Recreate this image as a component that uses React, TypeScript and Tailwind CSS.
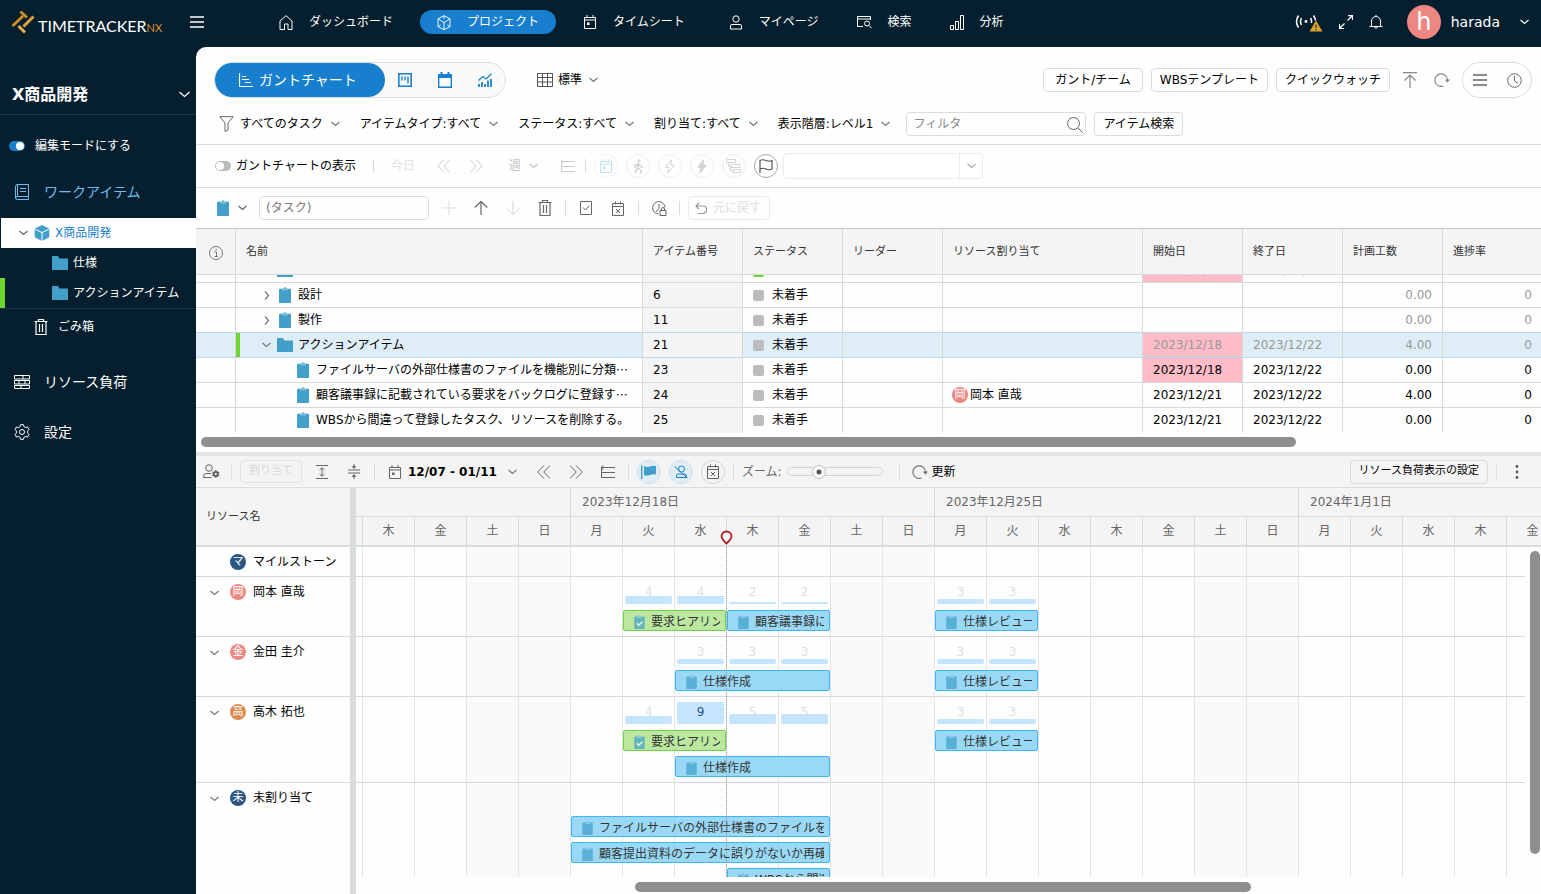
import type { ReactNode } from "react";

/* ---------- icons ---------- */

type IconProps = { className?: string; w?: number; h?: number; box?: string; children?: ReactNode; sw?: number };

function Svg({ className = "", w = 16, h = 16, box, children, sw = 1 }: IconProps) {
  return (
    <svg
      aria-hidden="true"
      width={w}
      height={h}
      viewBox={box ?? `0 0 ${w} ${h}`}
      fill="none"
      stroke="currentColor"
      strokeWidth={sw}
      className={`shrink-0 ${className}`}
    >
      {children}
    </svg>
  );
}

const Chevron = ({ className = "" }: { className?: string }) => (
  <Svg w={9} h={6} sw={1.2} className={className}>
    <path d="M0.5 1l4 3.5 4-3.5" />
  </Svg>
);
const ChevronRight = () => (
  <Svg w={6} h={9} sw={1.2} className="text-[#777]">
    <path d="M1 0.5l3.5 4-3.5 4" />
  </Svg>
);
const Clipboard = ({ small = false, check = false }: { small?: boolean; check?: boolean }) => (
  <Svg w={small ? 11 : 12} h={small ? 14 : 16} box="0 0 12 16">
    <rect x="0" y="1.800" width="12" height="14.200" rx="1" fill="#429fca" stroke="none" />
    <path d="M3 3.500V1.500h1.500a1.500 1.500 0 0 1 3 0H9v2z" fill="#7cc0de" stroke="none" />
    {check && <path d="M3 9.500l2.300 2.300L9.500 7.500" stroke="#e6fbd8" strokeWidth="1.800" />}
  </Svg>
);
const Folder = () => (
  <Svg w={16} h={14}>
    <path d="M0 0h6l1.500 2.500H16V14H0z" fill="#429fca" stroke="none" />
  </Svg>
);
const CubeSolid = () => (
  <Svg w={16} h={16}>
    <path d="M8 0l7.300 3.500v8.700L8 16 .7 12.200V3.500z" fill="#429fca" stroke="none" />
    <path d="M.7 4L8 7.600 15.300 4M8 7.600V16" stroke="#fff" strokeWidth="1" />
  </Svg>
);
const Trash = ({ className = "" }: { className?: string }) => (
  <Svg w={14} h={16} className={className}>
    <path d="M0.500 2.500h13M4.500 2V.5h5V2M2 3v12.500h10V3M5.500 5v8M8.500 5v8" strokeWidth="1.200" />
  </Svg>
);
const CalendarDot = ({ className = "" }: { className?: string }) => (
  <Svg w={14} h={14} className={className}>
    <path d="M1.500 2.500h11v11h-11zM1.500 5h11M4 0v3M10 0v3" />
    <path d="M4 7.500h2.500v2.500H4z" fill="currentColor" stroke="none" />
  </Svg>
);
const CalendarX = () => (
  <Svg w={14} h={15}>
    <path d="M1.500 2.500h11v12h-11zM1.500 5.500h11M4.500 .5v3M9.500 .5v3M5 8l4 4M9 8l-4 4" />
  </Svg>
);
const DoubleLeft = () => (
  <Svg w={14} h={14}>
    <path d="M7 .5L.700 7 7 13.500M13 .5L6.700 7l6.300 6.500" />
  </Svg>
);
const DoubleRight = () => (
  <Svg w={14} h={14}>
    <path d="M1 .5L7.300 7 1 13.500M7 .5L13.300 7 7 13.500" />
  </Svg>
);
const Outdent = () => (
  <Svg w={16} h={14}>
    <path d="M1 2.500h14M3.500 .5l-2.500 2 2.500 2M1.500 2.500v10M1.500 7.500H15M1.500 12.500H15" />
  </Svg>
);
const Refresh = ({ className = "" }: { className?: string }) => (
  <Svg w={16} h={14} className={className}>
    <path d="M9.500 13A6.300 6.300 0 1 1 13.500 7.500" strokeWidth="1.200" />
    <path d="M10.800 6.500h5.200L13.400 9.800z" fill="currentColor" stroke="none" />
  </Svg>
);
const Lines = ({ className = "" }: { className?: string }) => (
  <Svg w={14} h={12} className={className}>
    <path d="M0 1h14M0 6h14M0 11h14" strokeWidth="1.300" />
  </Svg>
);
const ArrowUp = () => (
  <Svg w={14} h={16}>
    <path d="M7 1.500V15M.700 7.500L7 1.500l6.300 6" strokeWidth="1.200" />
  </Svg>
);
const ArrowDown = () => (
  <Svg w={14} h={16}>
    <path d="M7 1v13.500M.700 8.500l6.300 6 6.300-6" />
  </Svg>
);
const Logo = () => (
  <Svg w={24} h={26}>
    <g strokeWidth="3">
      <path d="M9.500 2.500l6.500 6" stroke="#cf8a26" />
      <path d="M1.500 17L12 7" stroke="#d48d24" />
      <path d="M12.500 17.500l10-10" stroke="#e2a040" />
      <path d="M7.500 17l6.500 6.500" stroke="#edae50" />
    </g>
  </Svg>
);

/* ---------- small parts ---------- */

const Sep = () => <span className="h-3.5 w-px shrink-0 bg-[#d8dadb]" />;

function IconBtn({ label, className = "text-[#666]", disabled, children }: { label: string; className?: string; disabled?: boolean; children: ReactNode }) {
  return (
    <button type="button" aria-label={label} disabled={disabled} className={`flex size-6 shrink-0 items-center justify-center rounded-full ${className}`}>
      {children}
    </button>
  );
}

function TextBtn({ children, className = "px-2" }: { children: ReactNode; className?: string }) {
  return (
    <button type="button" className={`flex h-6 shrink-0 items-center justify-center rounded border border-[#dcdcdc] whitespace-nowrap ${className}`}>
      {children}
    </button>
  );
}

function Dropdown({ children }: { children: ReactNode }) {
  return (
    <button type="button" aria-haspopup="menu" className="flex shrink-0 items-center gap-2 whitespace-nowrap">
      {children}
      <Chevron className="text-[#777]" />
    </button>
  );
}

function Toggle({ label, on, className }: { label: string; on?: boolean; className: string }) {
  return (
    <label className={`flex shrink-0 items-center whitespace-nowrap ${className}`}>
      <input
        type="checkbox"
        defaultChecked={on}
        className="flex h-2.5 w-4 shrink-0 appearance-none items-center rounded-full bg-[#bcbcbc] p-px before:size-2 before:rounded-full before:bg-white checked:justify-end checked:bg-[#177fce]"
      />
      {label}
    </label>
  );
}

function Avatar({ children, color }: { children: ReactNode; color: string }) {
  return <span className={`flex size-4 shrink-0 items-center justify-center rounded-full text-[11px] leading-4 text-white ${color}`}>{children}</span>;
}

/* ---------- header and sidebar ---------- */

function NavItem({ icon, children, active }: { icon: ReactNode; children: ReactNode; active?: boolean }) {
  return (
    <a href="#" className={`flex h-6 items-center gap-4 rounded-full px-[17px] whitespace-nowrap ${active ? "bg-[#177fce]" : ""}`}>
      {icon}
      {children}
    </a>
  );
}

function Header() {
  return (
    <header className="flex h-[47px] shrink-0 items-center pb-[3px] text-white">
      <a href="#" className="flex w-[190px] shrink-0 items-center gap-[3px] pl-[11px]">
        <Logo />
        <span className="pt-2.5 font-['Lato',sans-serif] text-base leading-5 whitespace-nowrap">
          TIMETRACKER<span className="text-[11px] text-[#d9922b]">NX</span>
        </span>
      </a>
      <button type="button" aria-label="メニュー">
        <Lines />
      </button>
      <nav className="ml-[58px] flex items-center gap-1">
        <div className="flex items-center gap-2.5">
          <NavItem icon={<Svg w={14} h={15}><path d="M1 14.500V6L7 .700 13 6v8.500H9V9H5.500v5.500z" /></Svg>}>ダッシュボード</NavItem>
          <NavItem active icon={<Svg w={14} h={15}><path d="M7 .700l6 3v8l-6 3-6-3v-8zM1 3.700l6 4 6-4M7 7.700v7M1 11.500l2.500-1.500M13 11.500l-2.500-1.500M7 .700V4" strokeWidth=".9" /></Svg>}>プロジェクト</NavItem>
          <NavItem icon={<CalendarDot />}>タイムシート</NavItem>
          <NavItem icon={<Svg w={14} h={15}><circle cx="7" cy="4" r="3.200" /><path d="M1.500 14v-3q0-1.500 1.500-1.500h8q1.500 0 1.500 1.500v3z" /></Svg>}>マイページ</NavItem>
        </div>
        <NavItem icon={<Svg w={15} h={14}><path d="M13.500 5V1.500H.5v10H6M.5 4h13" /><circle cx="10" cy="8.500" r="2.500" /><path d="M12 10.500l2.500 2.500" /></Svg>}>検索</NavItem>
        <NavItem icon={<Svg w={14} h={15}><path d="M.5 10.500h3v4h-3zM5.500 6.500h3v8h-3zM10.500 .5h3v14h-3z" /></Svg>}>分析</NavItem>
      </nav>
      <div className="ml-auto flex items-center gap-4 pr-3">
        <button type="button" aria-label="接続状態">
          <Svg w={28} h={20}>
            <path d="M3.500 3.500q-4 6.500 0 12M6.500 6q-2 3.500 0 7M18.500 3.500q2 3 2 5M15.500 6q1.500 2 .8 5" strokeWidth="1.500" />
            <circle cx="11" cy="9.500" r="1.400" fill="currentColor" stroke="none" />
            <path d="M21 8.500l6.500 11h-13z" fill="#dfa02d" stroke="none" />
            <path d="M21 12.500v3.500M21 17v1.500" stroke="#5c4a1c" strokeWidth="1.600" />
          </Svg>
        </button>
        <button type="button" aria-label="全画面">
          <Svg w={14} h={14}><path d="M8.500 5.500l4.500-4.500M9 .600h4.500V5M5.500 8.500L1 13M.600 9v4.500H5" strokeWidth="1.200" /></Svg>
        </button>
        <button type="button" aria-label="通知">
          <Svg w={14} h={14}><path d="M.5 11.500h13M2.500 11V6a4.500 4.500 0 0 1 9 0v5M7 0v1.500M5.500 12.500q1.500 1.500 3 0" /></Svg>
        </button>
        <button type="button" className="ml-2 flex items-center text-sm">
          <span className="flex size-[34px] items-center justify-center rounded-full bg-[#ec8782] text-2xl leading-8">h</span>
          <span className="ml-2.5">harada</span>
          <Chevron className="ml-5" />
        </button>
      </div>
    </header>
  );
}

function Sidebar() {
  return (
    <aside className="flex w-[196px] shrink-0 flex-col text-white">
      <button type="button" className="flex h-[68px] items-center justify-between border-b border-[#1d3545] pt-7 pr-1.5 pl-3 text-base font-bold">
        X商品開発
        <Svg w={11} h={7} sw={1.2}><path d="M.5 1l5 4.500 5-4.500" /></Svg>
      </button>
      <Toggle label="編集モードにする" on className="h-[62px] gap-2.5 pl-[9px]" />
      <a href="#" className="flex h-[41px] items-center gap-3.5 pb-3 pl-3.5 text-sm text-[#6fbcf0]">
        <Svg w={16} h={16}><path d="M3.500 .5h11v12h-11M3.500 .5Q1.500 .5 1.500 2.500v11.500q0-1.500 2-1.500V.5M1.500 14q0 1.500 2 1.500h11v-3M6 4.500h6M6 7.500h6" /></Svg>
        ワークアイテム
      </a>
      <nav className="border-b border-[#1d3545]">
        <a href="#" className="ml-px flex h-[30px] items-center bg-white pl-[18px] text-[#177fce]">
          <Chevron className="text-[#666]" />
          <span className="mr-[5px] ml-1.5"><CubeSolid /></span>
          X商品開発
        </a>
        <a href="#" className="flex h-[30px] items-center gap-[5px] pl-[52px]"><Folder />仕様</a>
        <a href="#" className="flex h-[30px] items-center gap-[5px] border-l-[5px] border-[#6fd62f] pl-[47px] whitespace-nowrap"><Folder />アクションアイテム</a>
      </nav>
      <a href="#" className="flex h-9 items-center gap-2.5 pl-[34px]"><Trash />ごみ箱</a>
      <a href="#" className="mt-3 flex h-[50px] items-center gap-3.5 pl-3.5 text-sm">
        <Svg w={16} h={14}><path d="M.5 .5h15v3.500H.5zM.5 5.500h15v3.500H.5zM.5 10.500h15V13.500H.5zM9 .5V4M5 5.500V9M11 5.500V9M7 10.500V13.500" /></Svg>
        リソース負荷
      </a>
      <a href="#" className="flex h-[50px] items-center gap-3.5 pl-3.5 text-sm">
        <Svg w={16} h={16}>
          <path d="M6.500 .700h3l.6 2.100 1.300.7 2.100-.5 1.500 2.600-1.500 1.600v1.600l1.500 1.600-1.500 2.600-2.100-.5-1.300.7-.6 2.100h-3l-.6-2.100-1.300-.7-2.100.5L1 10.400l1.500-1.600V7.200L1 5.600 2.500 3l2.100.5 1.300-.7z" />
          <circle cx="8" cy="8" r="2.500" />
        </Svg>
        設定
      </a>
    </aside>
  );
}

/* ---------- upper toolbars ---------- */

function ViewBar() {
  return (
    <div className="flex items-center pr-[9px] pl-[18px]">
      <div className="flex h-9 shrink-0 items-center rounded-full border border-[#dcdcdc] bg-[#fafafa] text-[#177fce]">
        <button type="button" className="flex h-[34px] w-[170px] items-center gap-1.5 rounded-full bg-[#177fce] pl-6 text-sm text-white">
          <Svg w={14} h={14}><path d="M.5 0v13.500H14M3 3.500h4M3 6.500h7M6 9.500h6" strokeWidth="1.200" /></Svg>
          ガントチャート
        </button>
        <button type="button" aria-label="ボード" className="flex w-10 justify-center">
          <Svg w={14} h={14}><path d="M.8 .8h12.400v12.400H.8z" strokeWidth="1.600" /><path d="M4 3.500v4M7 3.500v4M10 3.500v7" strokeWidth="1.400" /></Svg>
        </button>
        <button type="button" aria-label="カレンダー" className="flex w-10 justify-center">
          <Svg w={14} h={16}><path d="M.7 3h12.600v12.300H.7z" strokeWidth="1.400" /><path d="M0 2h14v4H0zM2.500 0h2v3h-2zM9.500 0h2v3h-2z" fill="currentColor" stroke="none" /></Svg>
        </button>
        <button type="button" aria-label="グラフ" className="flex w-10 justify-center">
          <Svg w={14} h={14}><path d="M1 14v-3M4 14v-5M7 14v-3M10 14V7.500M13 14V6" strokeWidth="1.800" /><path d="M.5 7.500L5 3.500l3 2.500L13.500 .7" strokeWidth="1.300" /></Svg>
        </button>
      </div>
      <button type="button" aria-haspopup="menu" className="ml-[31px] flex items-center gap-[5px] whitespace-nowrap">
        <Svg w={16} h={14} className="text-[#555]"><path d="M.5 .5h15v13H.5zM.5 4.500h15M.5 9h15M5.500 .5v13M10.500 .5v13" /></Svg>
        標準
        <Chevron className="ml-0.5 text-[#777]" />
      </button>
      <div className="ml-auto flex items-center gap-2">
        <TextBtn className="px-[11px]">ガント/チーム</TextBtn>
        <TextBtn>WBSテンプレート</TextBtn>
        <TextBtn>クイックウォッチ</TextBtn>
        <IconBtn label="先頭へ" className="text-[#888]"><Svg w={14} h={16}><path d="M0 .7h14M7 3v13M1.500 8.500L7 3l5.500 5.500" strokeWidth="1.200" /></Svg></IconBtn>
        <IconBtn label="再読み込み" className="text-[#888]"><Refresh /></IconBtn>
        <div className="flex h-9 w-[70px] items-center justify-between rounded-full border border-[#dcdcdc] px-[5px]">
          <IconBtn label="一覧"><Lines /></IconBtn>
          <IconBtn label="履歴"><Svg w={15} h={15}><circle cx="7.500" cy="7.500" r="6.800" /><path d="M7.500 3v5l3.500 2.500" /></Svg></IconBtn>
        </div>
      </div>
    </div>
  );
}

function FilterBar() {
  return (
    <div className="flex h-6 items-center gap-5 pl-[23px]">
      <div className="flex items-center gap-1.5">
        <Svg w={15} h={16} className="text-[#666]"><path d="M.8 .7h13.400L9 7v7l-3 1.500V7z" /></Svg>
        <Dropdown>すべてのタスク</Dropdown>
      </div>
      <Dropdown>アイテムタイプ:すべて</Dropdown>
      <Dropdown>ステータス:すべて</Dropdown>
      <Dropdown>割り当て:すべて</Dropdown>
      <Dropdown>表示階層:レベル1</Dropdown>
      <div className="-ml-1 flex gap-2">
        <label className="flex h-6 w-[180px] items-center rounded-sm border border-[#dcdcdc] pr-0.5 pl-1.5">
          <input aria-label="フィルタ" placeholder="フィルタ" className="w-full min-w-0 outline-none placeholder:text-[#888]" />
          <Svg w={17} h={17} className="text-[#666]"><circle cx="7.500" cy="7.500" r="6" /><path d="M12 12l4.500 4.500" /></Svg>
        </label>
        <TextBtn>アイテム検索</TextBtn>
      </div>
    </div>
  );
}

function GanttBar() {
  const ring = "border border-[#f0f0f0] text-[#d4d4d4]";
  return (
    <div className="flex h-[43px] items-center gap-2 border-b border-[#dcdcdc] pl-[19px] text-[#ccc]">
      <Toggle label="ガントチャートの表示" className="mr-[9px] gap-[5px] text-black" />
      <Sep />
      <button type="button" disabled className="mx-[9px] text-[#e2e2e2]">今日</button>
      <IconBtn label="前へ" disabled className="text-[#ccc]"><DoubleLeft /></IconBtn>
      <IconBtn label="次へ" disabled className="text-[#ccc]"><DoubleRight /></IconBtn>
      <button type="button" disabled className="mr-2.5 ml-[13px] flex items-center gap-2 text-[#c4c4c4]">週<Chevron /></button>
      <IconBtn label="アウトデント" disabled className="text-[#ccc]"><Outdent /></IconBtn>
      <span className="-ml-[3px] h-3.5 w-px bg-[#d8dadb]" />
      <IconBtn label="予定" disabled className="border border-[#eef4f7] text-[#bfe3f0]"><CalendarDot /></IconBtn>
      <IconBtn label="進捗" disabled className={ring}>
        <Svg w={12} h={15}><circle cx="7" cy="1.700" r="1.500" fill="currentColor" stroke="none" /><path d="M6.500 4L5.500 9l3 2 .7 3.500M5.500 9L2.500 14M6.500 4.500L3 6.500v2.500M7 5l1.500 2.500 2.500.7" strokeWidth="1.500" /></Svg>
      </IconBtn>
      <IconBtn label="イナズマ線" disabled className={ring}><Svg w={12} h={15}><path d="M7.500 .8L1.500 8.500h3.500L4 14l6.500-8H7z" /></Svg></IconBtn>
      <IconBtn label="イナズマ" disabled className={ring}><Svg w={12} h={15}><path d="M7.500 .8L1.500 8.500h3.500L4 14l6.500-8H7z" fill="currentColor" /></Svg></IconBtn>
      <IconBtn label="依存関係" disabled className={ring}><Svg w={15} h={14}><path d="M.5 .5h9v3h-9zM5 5.500h9v3H5zM7 10.500h7.500v3H7zM2.500 3.500V7H5M4.500 7v5H7" /></Svg></IconBtn>
      <IconBtn label="マイルストーン" className="border border-[#aaa] text-[#555]"><Svg w={14} h={14}><path d="M1 14V1.500q3-1.500 6 0t6 0v8.500q-3 1.500-6 0t-6 0" strokeWidth="1.200" /></Svg></IconBtn>
      <div className="relative -ml-[3px] w-[200px]">
        <select aria-label="ベースライン" disabled className="h-[26px] w-full appearance-none rounded border border-[#ececec] bg-white" />
        <span className="pointer-events-none absolute inset-y-px right-0 flex w-6 items-center justify-center border-l border-[#ececec]">
          <Chevron className="text-[#aaa]" />
        </span>
      </div>
    </div>
  );
}

function TaskBar() {
  return (
    <div className="flex h-[41px] items-center gap-2 border-b border-[#c4c4c4] pl-[21px]">
      <button type="button" aria-label="アイテムの種類" className="mr-1 flex items-center gap-[9px] text-[#666]">
        <Clipboard />
        <Chevron />
      </button>
      <input aria-label="タスク名" placeholder="(タスク)" className="h-6 w-[170px] rounded-sm border border-[#dcdcdc] px-1.5 outline-none placeholder:text-[#777]" />
      <IconBtn label="追加" disabled className="text-[#ddd]"><Svg w={14} h={14}><path d="M7 0v14M0 7h14" /></Svg></IconBtn>
      <IconBtn label="上へ"><ArrowUp /></IconBtn>
      <IconBtn label="下へ" disabled className="text-[#d4d4d4]"><ArrowDown /></IconBtn>
      <IconBtn label="削除"><Trash /></IconBtn>
      <Sep />
      <IconBtn label="完了"><Svg w={12} h={14}><path d="M.5 .5h11v13H.5zM3 6.500L5.500 9l4-4.500" /></Svg></IconBtn>
      <IconBtn label="中止"><CalendarX /></IconBtn>
      <Sep />
      <IconBtn label="実績ロック">
        <Svg w={15} h={15}><path d="M6.500 13A6.200 6.200 0 1 1 13 6.500M7 3v4.500L4 11" /><path d="M8 9.500h6v5H8zM9.500 9.500V8q0-1.500 1.500-1.500T12.500 8v1.500" /></Svg>
      </IconBtn>
      <Sep />
      <button type="button" disabled className="flex h-6 items-center gap-1.5 rounded border border-[#ebebeb] pr-2 pl-1.5 whitespace-nowrap text-[#dedede]">
        <Svg w={12} h={13} className="text-[#999]"><path d="M4 1L1 4l3 3M1 4h7q3.500 0 3.500 3.500T8 11.500H3" strokeWidth="1.200" /></Svg>
        元に戻す
      </button>
    </div>
  );
}

/* ---------- work item table ---------- */

type Item = { name: string; cut?: boolean; no: string; kind: "group" | "folder" | "leaf"; who?: string; start?: string; end?: string; late?: boolean; hours: string };

const ITEMS: Item[] = [
  { name: "設計", no: "6", kind: "group", hours: "0.00" },
  { name: "製作", no: "11", kind: "group", hours: "0.00" },
  { name: "アクションアイテム", no: "21", kind: "folder", start: "2023/12/18", end: "2023/12/22", late: true, hours: "4.00" },
  { name: "ファイルサーバの外部仕様書のファイルを機能別に分類", cut: true, no: "23", kind: "leaf", start: "2023/12/18", end: "2023/12/22", late: true, hours: "0.00" },
  { name: "顧客議事録に記載されている要求をバックログに登録す", cut: true, no: "24", kind: "leaf", who: "岡本 直哉", start: "2023/12/21", end: "2023/12/22", hours: "4.00" },
  { name: "WBSから間違って登録したタスク、リソースを削除する。", no: "25", kind: "leaf", start: "2023/12/21", end: "2023/12/22", hours: "0.00" },
];

const HEADS = ["アイテム番号", "ステータス", "リーダー", "リソース割り当て", "開始日", "終了日", "計画工数", "進捗率"];

/* Bottom edge of a row that is scrolled under the table header. */
function Peek({ children }: { children?: ReactNode }) {
  return (
    <div className="flex h-[7px] items-end overflow-hidden">
      <div className="flex h-6 shrink-0 items-center">{children}</div>
    </div>
  );
}

function ItemTable() {
  return (
    <div className="overflow-hidden">
      <table className="w-full table-fixed border-separate border-spacing-0 text-left">
        <colgroup>
          <col className="w-10" />
          <col />
          <col className="w-[100px]" />
          <col className="w-[100px]" />
          <col className="w-[100px]" />
          <col className="w-[200px]" />
          <col className="w-[100px]" />
          <col className="w-[100px]" />
          <col className="w-[100px]" />
          <col className="w-[98px]" />
        </colgroup>
        <thead className="bg-[#f4f4f4] text-[11px] text-[#333] [&_th]:h-[46px] [&_th]:border-b [&_th]:border-[#d9d9d9] [&_th]:pt-0.5 [&_th]:font-normal [&_th:not(:last-child)]:border-r">
          <tr>
            <th aria-label="情報">
              <Svg w={14} h={14} className="mx-auto text-[#777]"><circle cx="7" cy="7" r="6.500" /><path d="M5.500 6H7.500v4.500M5.500 10.500h3.500" /><path d="M6.500 3h1.300v1.300H6.500z" fill="currentColor" stroke="none" /></Svg>
            </th>
            <th className="px-2.5">名前</th>
            {HEADS.map((h) => (
              <th key={h} className="px-2.5 whitespace-nowrap">{h}</th>
            ))}
          </tr>
        </thead>
        <tbody className="[&_td]:border-[#d9d9d9] [&_td]:border-b [&_td:not(:last-child)]:border-r [&_td]:whitespace-nowrap">
          <tr className="text-[#888]">
            <td />
            <td><Peek><span className="ml-[41px]"><Folder /></span></Peek></td>
            <td className="bg-[#f4f4f4]" />
            <td className="px-2.5"><Peek><span className="mt-1 h-2.5 w-[11px] rounded-xs bg-[#6fd62f]" /></Peek></td>
            <td />
            <td />
            <td className="bg-[#fdbcc8] px-2.5"><Peek>2023/12/18</Peek></td>
            <td className="px-2.5"><Peek>2023/12/22</Peek></td>
            <td />
            <td />
          </tr>
          {ITEMS.map((it, i) => {
            const sel = it.kind === "folder";
            const muted = it.kind === "leaf" ? "" : "text-[#999]";
            const last = i === ITEMS.length - 1;
            const beforeSel = ITEMS[i + 1]?.kind === "folder";
            return (
              <tr
                key={it.no}
                className={`[&>td]:h-[25px] ${sel ? "bg-[#deedf6] [&>td]:border-b-[#b9d9ee]" : ""} ${beforeSel ? "[&>td]:border-b-[#b9d9ee]" : ""} ${last ? "[&>td]:border-b-transparent" : ""}`}
              >
                <td />
                <td>
                  <div className={`flex h-6 items-center ${sel ? "border-l-4 border-[#6fd62f] pl-[22px]" : it.kind === "group" ? "pl-7" : "pl-[61px]"}`}>
                    {it.kind === "group" && <><ChevronRight /><span className="mr-[7px] ml-[9px]"><Clipboard /></span></>}
                    {sel && <><Chevron className="text-[#777]" /><span className="mr-[5px] ml-1.5"><Folder /></span></>}
                    {it.kind === "leaf" && <span className="mr-[7px]"><Clipboard /></span>}
                    {it.name}
                    {it.cut && <span className="font-['Noto_Sans_CJK_JP',sans-serif]">…</span>}
                  </div>
                </td>
                <td className="bg-[#f4f4f4] px-2.5">{it.no}</td>
                <td className="px-2.5">
                  <span className="flex items-center gap-2"><span className="size-[11px] rounded-xs bg-[#bcbcbc]" />未着手</span>
                </td>
                <td />
                <td className="px-[9px]">
                  {it.who && <span className="flex items-center gap-0.5"><Avatar color="bg-[#ec8782]">{it.who[0]}</Avatar>{it.who}</span>}
                </td>
                <td className={`px-2.5 ${muted} ${it.late ? "bg-[#fdbcc8]" : ""}`}>{it.start}</td>
                <td className={`px-2.5 ${muted}`}>{it.end}</td>
                <td className={`px-2.5 text-right ${muted}`}>{it.hours}</td>
                <td className={`px-[9px] text-right ${muted}`}>0</td>
              </tr>
            );
          })}
        </tbody>
      </table>
    </div>
  );
}

/* ---------- resource load chart ---------- */

function LoadBar() {
  return (
    <div className="flex h-8 shrink-0 items-center gap-2 border-b border-[#dcdcdc] bg-[#f4f4f4] pr-3 pl-[3px]">
      <IconBtn label="メンバー設定">
        <Svg w={17} h={15}><circle cx="6" cy="4" r="3.300" /><path d="M8.500 13.500H.7V12q0-2.500 2.500-2.500h5" /><circle cx="12.800" cy="10" r="2.200" strokeWidth="1.800" /><path d="M12.800 6v8M9.300 8l7 4M9.300 12l7-4" strokeWidth="1.200" /><circle cx="12.800" cy="10" r="1.100" fill="#f4f4f4" stroke="none" /></Svg>
      </IconBtn>
      <Sep />
      <button type="button" disabled className="h-[23px] rounded border border-[#e4e4e4] px-2 text-[11px] whitespace-nowrap text-[#dadada]">割り当て</button>
      <IconBtn label="広げる"><Svg w={12} h={14}><path d="M0 .5h12M0 13.500h12M6 3v8M3.500 5L6 2.700 8.500 5M3.500 9L6 11.300 8.500 9" /></Svg></IconBtn>
      <IconBtn label="縮める"><Svg w={12} h={15}><path d="M0 6h12M0 9h12M6 0v3.500M6 11.500V15" /><path d="M3.500 2.300h5L6 5zM3.500 12.700h5L6 10z" fill="currentColor" stroke="none" /></Svg></IconBtn>
      <Sep />
      <button type="button" aria-haspopup="menu" className="mr-[7px] ml-[5px] flex items-center gap-1.5 font-bold whitespace-nowrap">
        <CalendarDot className="text-[#666]" />
        12/07 - 01/11
        <Chevron className="ml-[5px] text-[#777]" />
      </button>
      <IconBtn label="前へ"><DoubleLeft /></IconBtn>
      <IconBtn label="次へ"><DoubleRight /></IconBtn>
      <IconBtn label="アウトデント"><Outdent /></IconBtn>
      <Sep />
      <IconBtn label="マイルストーン" className="border border-[#d5dde2] bg-[#deedf6] text-[#429fca]"><Svg w={15} h={14}><path d="M.7 .5v13.500" strokeWidth="1.400" /><path d="M3 1q3 1.500 6 .5t6-.5v8.500q-3-.5-6 .5t-6 0z" fill="currentColor" stroke="none" /></Svg></IconBtn>
      <IconBtn label="担当なし" className="border border-[#d5dde2] bg-[#deedf6] text-[#177fce]"><Svg w={14} h={14}><circle cx="7.500" cy="4" r="3" /><path d="M2.500 12.500V11q0-2 2-2h6q2 0 2 2v1.500zM.7 1.500l12.600 11.500" /></Svg></IconBtn>
      <IconBtn label="休日" className="border border-[#d5d5d5] text-[#666]"><CalendarX /></IconBtn>
      <Sep />
      <label className="flex items-center gap-[5px] whitespace-nowrap text-[#666]">
        ズーム:
        <input
          type="range"
          defaultValue={31}
          className="h-[9px] w-24 appearance-none rounded-full border border-[#d5d5d5] bg-[#f4f4f4] [&::-webkit-slider-thumb]:size-3.5 [&::-webkit-slider-thumb]:appearance-none [&::-webkit-slider-thumb]:rounded-full [&::-webkit-slider-thumb]:border [&::-webkit-slider-thumb]:border-[#bbb] [&::-webkit-slider-thumb]:bg-[radial-gradient(circle,#555_0_2px,#fff_3px)]"
        />
      </label>
      <span className="ml-2 h-3.5 w-px bg-[#d8dadb]" />
      <button type="button" className="ml-1 flex items-center gap-1 whitespace-nowrap"><Refresh className="text-[#777]" />更新</button>
      <TextBtn className="ml-auto px-2 text-[11px]">リソース負荷表示の設定</TextBtn>
      <Sep />
      <IconBtn label="その他" className="text-[#555]"><Svg w={4} h={14}><g fill="currentColor" stroke="none"><circle cx="2" cy="1.500" r="1.400" /><circle cx="2" cy="7" r="1.400" /><circle cx="2" cy="12.500" r="1.400" /></g></Svg></IconBtn>
    </div>
  );
}

const COL = 52;
const LEAD = 7;
const FIRST = "木金土日".split("");
const WEEK = "月火水木金土日".split("");
const DAYS = [...FIRST, ...WEEK, ...WEEK, ...WEEK.slice(0, 5)];

type Bar = { col: number; span: number; top: number; label: string; done?: boolean };
type Row = { name: string; mark: string; color: string; height: string; toggle: boolean; loads: [number, number][]; bars: Bar[] };

const ROWS: Row[] = [
  { name: "マイルストーン", mark: "マ", color: "bg-[#2d5783]", height: "h-[30px]", toggle: false, loads: [], bars: [] },
  {
    name: "岡本 直哉", mark: "岡", color: "bg-[#ec8782]", height: "h-[60px]", toggle: true,
    loads: [[5, 4], [6, 4], [7, 2], [8, 2], [11, 3], [12, 3]],
    bars: [
      { col: 5, span: 2, top: 33, label: "要求ヒアリング", done: true },
      { col: 7, span: 2, top: 33, label: "顧客議事録に記載" },
      { col: 11, span: 2, top: 33, label: "仕様レビュー" },
    ],
  },
  {
    name: "金田 圭介", mark: "金", color: "bg-[#ec8782]", height: "h-[60px]", toggle: true,
    loads: [[6, 3], [7, 3], [8, 3], [11, 3], [12, 3]],
    bars: [
      { col: 6, span: 3, top: 33, label: "仕様作成" },
      { col: 11, span: 2, top: 33, label: "仕様レビュー" },
    ],
  },
  {
    name: "高木 拓也", mark: "高", color: "bg-[#dc8c50]", height: "h-[86px]", toggle: true,
    loads: [[5, 4], [6, 9], [7, 5], [8, 5], [11, 3], [12, 3]],
    bars: [
      { col: 5, span: 2, top: 33, label: "要求ヒアリング", done: true },
      { col: 6, span: 3, top: 59, label: "仕様作成" },
      { col: 11, span: 2, top: 33, label: "仕様レビュー" },
    ],
  },
  {
    name: "未割り当て", mark: "未", color: "bg-[#2d5783]", height: "h-[120px]", toggle: true, loads: [],
    bars: [
      { col: 4, span: 5, top: 33, label: "ファイルサーバの外部仕様書のファイルを機能別" },
      { col: 4, span: 5, top: 59, label: "顧客提出資料のデータに誤りがないか再確認する" },
      { col: 7, span: 2, top: 85, label: "WBSから間違って" },
    ],
  },
];

const LOAD_HEIGHT: Record<number, number> = { 2: 2, 3: 5, 4: 8, 5: 10, 9: 22 };
const x = (col: number) => LEAD + col * COL;

function Chart() {
  return (
    <div className="flex min-h-0 flex-1">
      <div className="w-[154px] shrink-0 overflow-hidden">
        <div className="flex h-[59px] items-center border-b-2 border-[#d9dcdc] bg-[#f4f4f4] pt-0.5 pl-2.5 text-[11px] text-[#333]">リソース名</div>
        {ROWS.map((r, i) => (
          <div key={r.name} className={`flex items-start pt-[7px] pl-3.5 leading-4 ${r.height} ${i < ROWS.length - 1 ? "border-b border-[#d9d9d9]" : ""}`}>
            <span className="flex h-4 w-5 items-center pt-0.5">{r.toggle && <Chevron className="text-[#777]" />}</span>
            <Avatar color={r.color}>{r.mark}</Avatar>
            <span className="ml-[7px]">{r.name}</span>
          </div>
        ))}
      </div>
      <div className="w-1.5 shrink-0 bg-[#d9dcdc]" />
      <div className="relative flex min-w-0 flex-1 flex-col overflow-hidden">
        <div className="h-[59px] shrink-0 overflow-hidden border-b-2 border-[#d9dcdc] bg-[#f4f4f4] text-[#666]">
          <div className="flex h-[29px] items-center border-b border-[#d9d9d9] *:flex *:h-full *:shrink-0 *:items-center *:border-[#d9d9d9] *:pl-[11px]">
            <div className="w-[215px] border-r" />
            <div className="w-[364px] border-r">2023年12月18日</div>
            <div className="w-[364px] border-r">2023年12月25日</div>
            <div>2024年1月1日</div>
          </div>
          <div className="flex h-7">
            <div className="w-[7px] shrink-0 border-r border-[#d9d9d9]" />
            {DAYS.map((d, i) => (
              <div key={i} className="flex w-[52px] shrink-0 items-center justify-center border-r border-[#d9d9d9]">{d}</div>
            ))}
          </div>
        </div>
        <div className="flex min-h-0 flex-1">
          <div className="relative min-w-0 flex-1 overflow-hidden">
            <div className="absolute inset-0 flex">
              <div className="w-[7px] shrink-0 border-r border-[#e4e4e4]" />
              {DAYS.map((d, i) => (
                <div key={i} className={`w-[52px] shrink-0 border-r border-[#e4e4e4] ${"土日".includes(d) ? "bg-[#fafafa]" : ""}`} />
              ))}
            </div>
            {ROWS.map((r, i) => (
              <div key={r.name} className={`relative ${r.height} ${i < ROWS.length - 1 ? "border-b border-[#d9d9d9]" : ""}`}>
                {r.loads.map(([col, n]) => (
                  <div key={col} className="absolute top-0 h-[27px] w-[47px]" style={{ left: x(col) + 2 }}>
                    <div className="absolute inset-x-0 top-[7px] text-center leading-4 text-[#dedede]">{n < 9 && n}</div>
                    <div className="absolute inset-x-0 bottom-0 rounded-xs bg-[#bfe2fe]/90" style={{ height: LOAD_HEIGHT[n] }} />
                    {n === 9 && <div className="absolute inset-x-0 top-[7px] text-center leading-4 text-[#2d5783]">{n}</div>}
                  </div>
                ))}
                {r.bars.map((b) => (
                  <div
                    key={`${b.col}-${b.top}`}
                    className={`absolute flex h-[21px] items-center gap-1.5 rounded-xs border pt-0.5 pr-[5px] pl-2.5 leading-4 text-[#333] ${b.done ? "border-[#6fd04a] bg-[#aae187]/80" : "border-[#3fb6f3] bg-[#7fd0f4]/80"}`}
                    style={{ left: x(b.col), top: b.top, width: b.span * COL - 1 }}
                  >
                    <span className="shrink-0 opacity-70"><Clipboard small check={b.done} /></span>
                    <span className="min-w-0 overflow-hidden whitespace-nowrap">{b.label}</span>
                  </div>
                ))}
              </div>
            ))}
            <div className="absolute inset-y-0 border-l border-dotted border-[#999]" style={{ left: x(7) - 1 }} />
          </div>
          <div className="flex w-4 shrink-0 flex-col pt-1 pl-[5px]">
            <div className="w-2.5 flex-[303] rounded-full bg-[#8f8f8f]" />
            <div className="flex-[23]" />
          </div>
        </div>
        <div className="flex h-[17px] shrink-0 pt-[5px]">
          <div className="flex-[279]" />
          <div className="h-2.5 flex-[616] rounded-full bg-[#8f8f8f]" />
          <div className="flex-[290]" />
        </div>
        <div className="absolute top-[42px]" style={{ left: x(7) - 7 }}>
          <Svg w={13} h={15}><path d="M6.500 13.500Q1.500 9 1.500 6a5 4.500 0 0 1 10 0Q11.500 9 6.500 13.500z" stroke="#b01e23" strokeWidth="1.800" fill="#fff" /></Svg>
        </div>
      </div>
    </div>
  );
}

export default function App() {
  return (
    <div lang="ja" className="flex h-screen flex-col overflow-hidden bg-[#061f2e] font-['DejaVu_Sans','Noto_Sans_CJK_JP',sans-serif] text-xs text-black">
      <Header />
      <div className="flex min-h-0 flex-1">
        <Sidebar />
        <main className="flex min-w-0 flex-1 flex-col overflow-hidden rounded-tl-[10px] bg-[#fefefe]">
          <div className="flex h-[98px] shrink-0 flex-col gap-3.5 border-b border-[#dcdcdc] pt-[15px]">
            <ViewBar />
            <FilterBar />
          </div>
          <GanttBar />
          <TaskBar />
          <ItemTable />
          <div className="flex shrink-0 pt-1 pb-[5px] pl-[5px]">
            <div className="h-2.5 flex-[1095] rounded-full bg-[#8f8f8f]" />
            <div className="flex-[245]" />
          </div>
          <div className="h-1 shrink-0 bg-[#e4e4e4]" />
          <LoadBar />
          <Chart />
        </main>
      </div>
    </div>
  );
}
